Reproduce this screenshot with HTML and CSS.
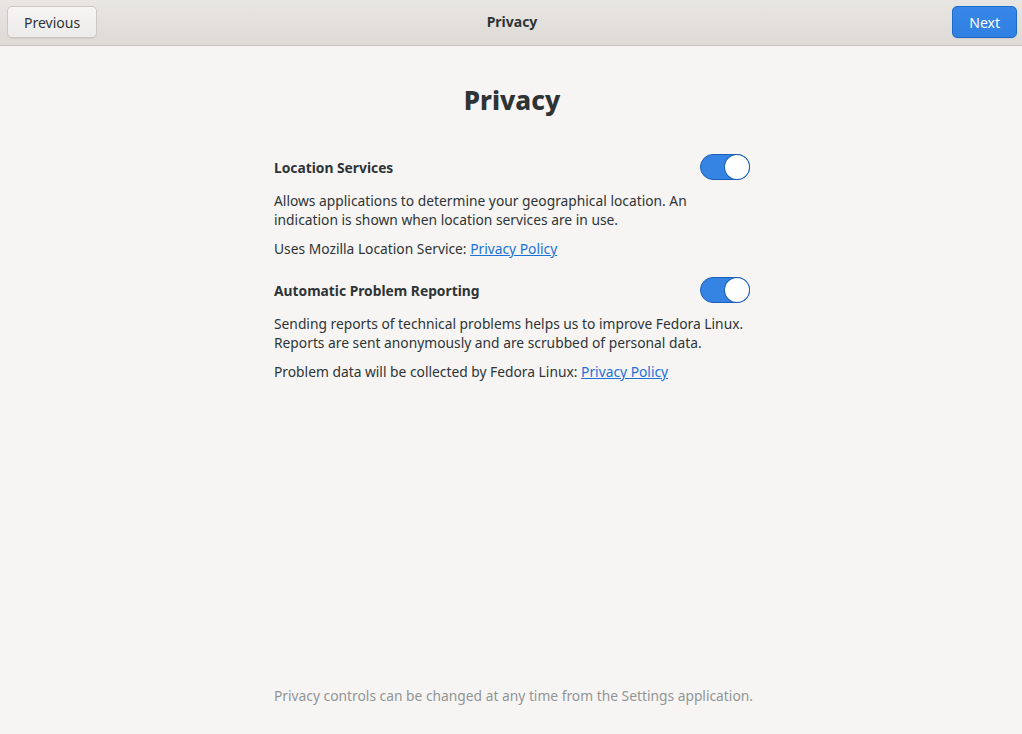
FILE: index.html
```html
<!DOCTYPE html>
<html lang="en">
  <head>
    <meta charset="UTF-8">
    <title>Privacy</title>
    <link rel="stylesheet" href="styles.css">
  </head>
  <body>
    <header class="headerbar">
      <div class="headerbar-start"><button class="btn">Previous</button></div>
      <span class="headerbar-title">Privacy</span>
      <div class="headerbar-end"><button class="btn btn-suggested">Next</button></div>
    </header>

    <main class="page">
      <h1 class="page-title">Privacy</h1>

      <section class="setting">
        <div class="setting-row">
          <span class="setting-name">Location Services</span>
          <span class="switch is-on"><span class="switch-knob"></span></span>
        </div>
        <p class="setting-desc">Allows applications to determine your geographical location. An indication is shown when location services are in use.</p>
        <p class="setting-desc">Uses Mozilla Location Service: <a href="#">Privacy Policy</a></p>
      </section>

      <section class="setting">
        <div class="setting-row">
          <span class="setting-name">Automatic Problem Reporting</span>
          <span class="switch is-on"><span class="switch-knob"></span></span>
        </div>
        <p class="setting-desc">Sending reports of technical problems helps us to improve Fedora Linux. Reports are sent anonymously and are scrubbed of personal data.</p>
        <p class="setting-desc">Problem data will be collected by Fedora Linux: <a href="#">Privacy Policy</a></p>
      </section>

      <p class="footnote">Privacy controls can be changed at any time from the Settings application.</p>
    </main>
  </body>
</html>
```

FILE: styles.css
```css
html, body {
  height: 100%;
}
body {
  margin: 0;
  display: flex;
  flex-direction: column;
  background: #f6f5f4;
  color: #2e3436;
  font-family: "Noto Sans", "Open Sans", sans-serif;
  font-size: 13.8px;
}
.headerbar {
  height: 46px;
  box-sizing: border-box;
  display: grid;
  grid-template-columns: 1fr auto 1fr;
  align-items: start;
  padding: 6px 5px 0 7px;
  background: linear-gradient(#e8e6e3, #dedad6);
  border-bottom: 1px solid #c9c4bf;
}
.headerbar-end {
  justify-self: end;
}
.headerbar-title {
  font-weight: bold;
  font-size: 14px;
  line-height: 32px;
}
.btn {
  height: 32px;
  padding: 0 16px;
  font-family: inherit;
  font-size: 14px;
  color: #2e3436;
  background: linear-gradient(#f6f5f4, #edebe9);
  border: 1px solid #cdc7c2;
  border-radius: 5px;
  box-shadow: 0 1px 1px rgba(0, 0, 0, 0.07);
}
.btn-suggested {
  color: #fff;
  background: linear-gradient(#3787e8, #3080e2);
  border-color: #1b6acb;
}
.page {
  flex: 1;
  width: 476px;
  margin-left: calc(50% - 237px);
  display: flex;
  flex-direction: column;
}
.page-title {
  margin: 36px 0 36px;
  text-align: center;
  font-size: 26px;
  font-weight: 800;
  line-height: 36px;
}
.setting {
  margin-bottom: 9px;
}
.setting-row {
  display: flex;
  align-items: center;
  justify-content: space-between;
  height: 26px;
  margin-bottom: 11px;
}
.setting-name {
  font-weight: bold;
}
.setting-desc {
  margin: 0 0 10px;
  line-height: 19px;
}
.setting-desc a {
  color: #1c71d8;
}
.switch {
  width: 50px;
  height: 26px;
  box-sizing: border-box;
  border-radius: 13px;
  border: 1px solid #1b5fb8;
  background: #3584e4;
  display: flex;
  justify-content: flex-end;
  align-items: center;
}
.switch-knob {
  width: 24px;
  height: 24px;
  border-radius: 50%;
  background: #fff;
  box-shadow: 0 0 0 1px #1b5fb8;
}
.footnote {
  margin: auto 0 29px;
  color: #929595;
  text-align: center;
  white-space: nowrap;
}
```
